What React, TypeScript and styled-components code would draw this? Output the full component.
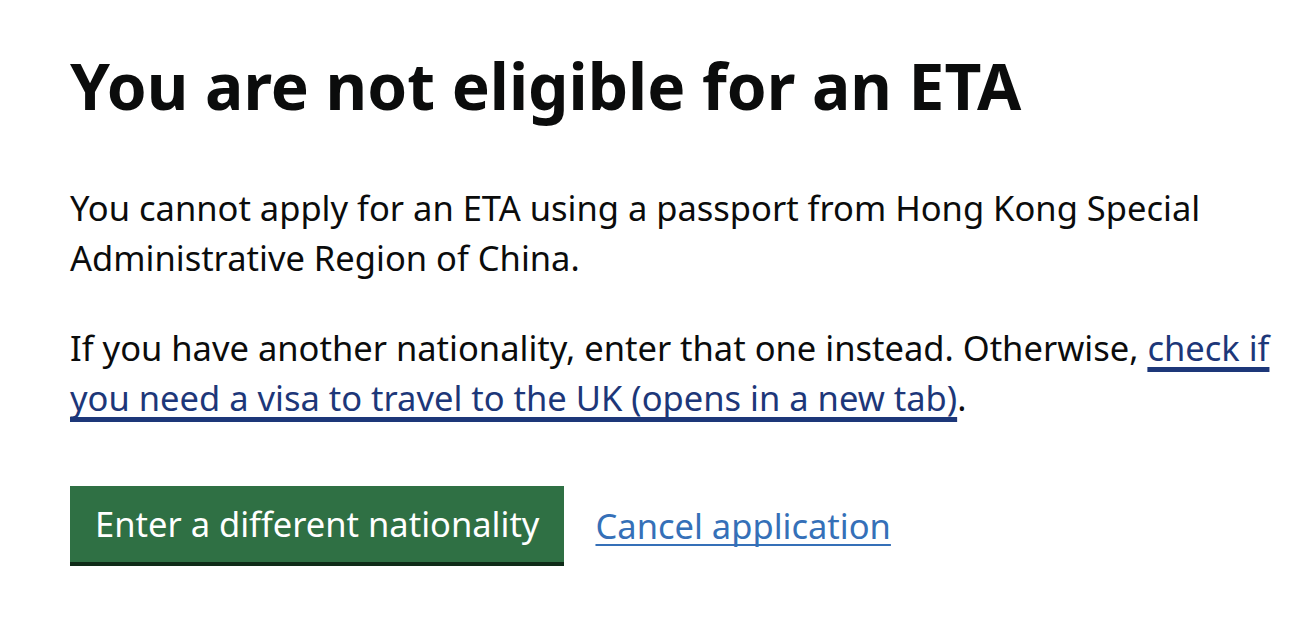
import React from "react";
import styled, { createGlobalStyle } from "styled-components";

const GlobalStyle = createGlobalStyle`
  html, body { margin: 0; padding: 0; background: #ffffff; }
  body { font-family: "Noto Sans", "Liberation Sans", Arial, sans-serif; color: #0b0c0c; }
`;

const Main = styled.main`
  padding: 46px 4px 0 70px;
  max-width: 1230px;
`;

const Heading = styled.h1`
  margin: 0 0 57px;
  font-size: 64px;
  line-height: 80px;
  font-weight: 700;
  color: #0b0c0c;
`;

const Body = styled.p`
  margin: 0 0 40px;
  font-size: 34.5px;
  line-height: 50px;
  color: #0b0c0c;
`;

const InlineLink = styled.a`
  color: #1d3779;
  text-decoration: underline;
  text-decoration-thickness: 5px;
  text-underline-offset: 6px;
  text-decoration-skip-ink: none;
`;

const Actions = styled.div`
  display: flex;
  align-items: center;
  gap: 31px;
  margin-top: 63px;
`;

const Button = styled.button`
  font-family: inherit;
  font-size: 34.5px;
  line-height: 50px;
  color: #ffffff;
  background: #2f7044;
  border: 0;
  border-radius: 0;
  padding: 13px 25px;
  box-shadow: 0 4px 0 #0f2b18;
  margin-bottom: 4px;
  cursor: pointer;
`;

const TextLink = styled.a`
  font-size: 34.5px;
  line-height: 50px;
  color: #3570b8;
  text-decoration: underline;
  text-decoration-thickness: 2px;
  text-underline-offset: 5px;
  text-decoration-skip-ink: none;
`;

export default function App() {
  return (
    <>
      <GlobalStyle />
      <Main>
        <Heading>You are not eligible for an ETA</Heading>
        <Body>
          You cannot apply for an ETA using a passport from Hong Kong Special
          Administrative Region of China.
        </Body>
        <Body>
          If you have another nationality, enter that one instead. Otherwise,{" "}
          <InlineLink href="#">
            check if you need a visa to travel to the UK (opens in a new tab)
          </InlineLink>
          .
        </Body>
        <Actions>
          <Button type="button">Enter a different nationality</Button>
          <TextLink href="#">Cancel application</TextLink>
        </Actions>
      </Main>
    </>
  );
}
